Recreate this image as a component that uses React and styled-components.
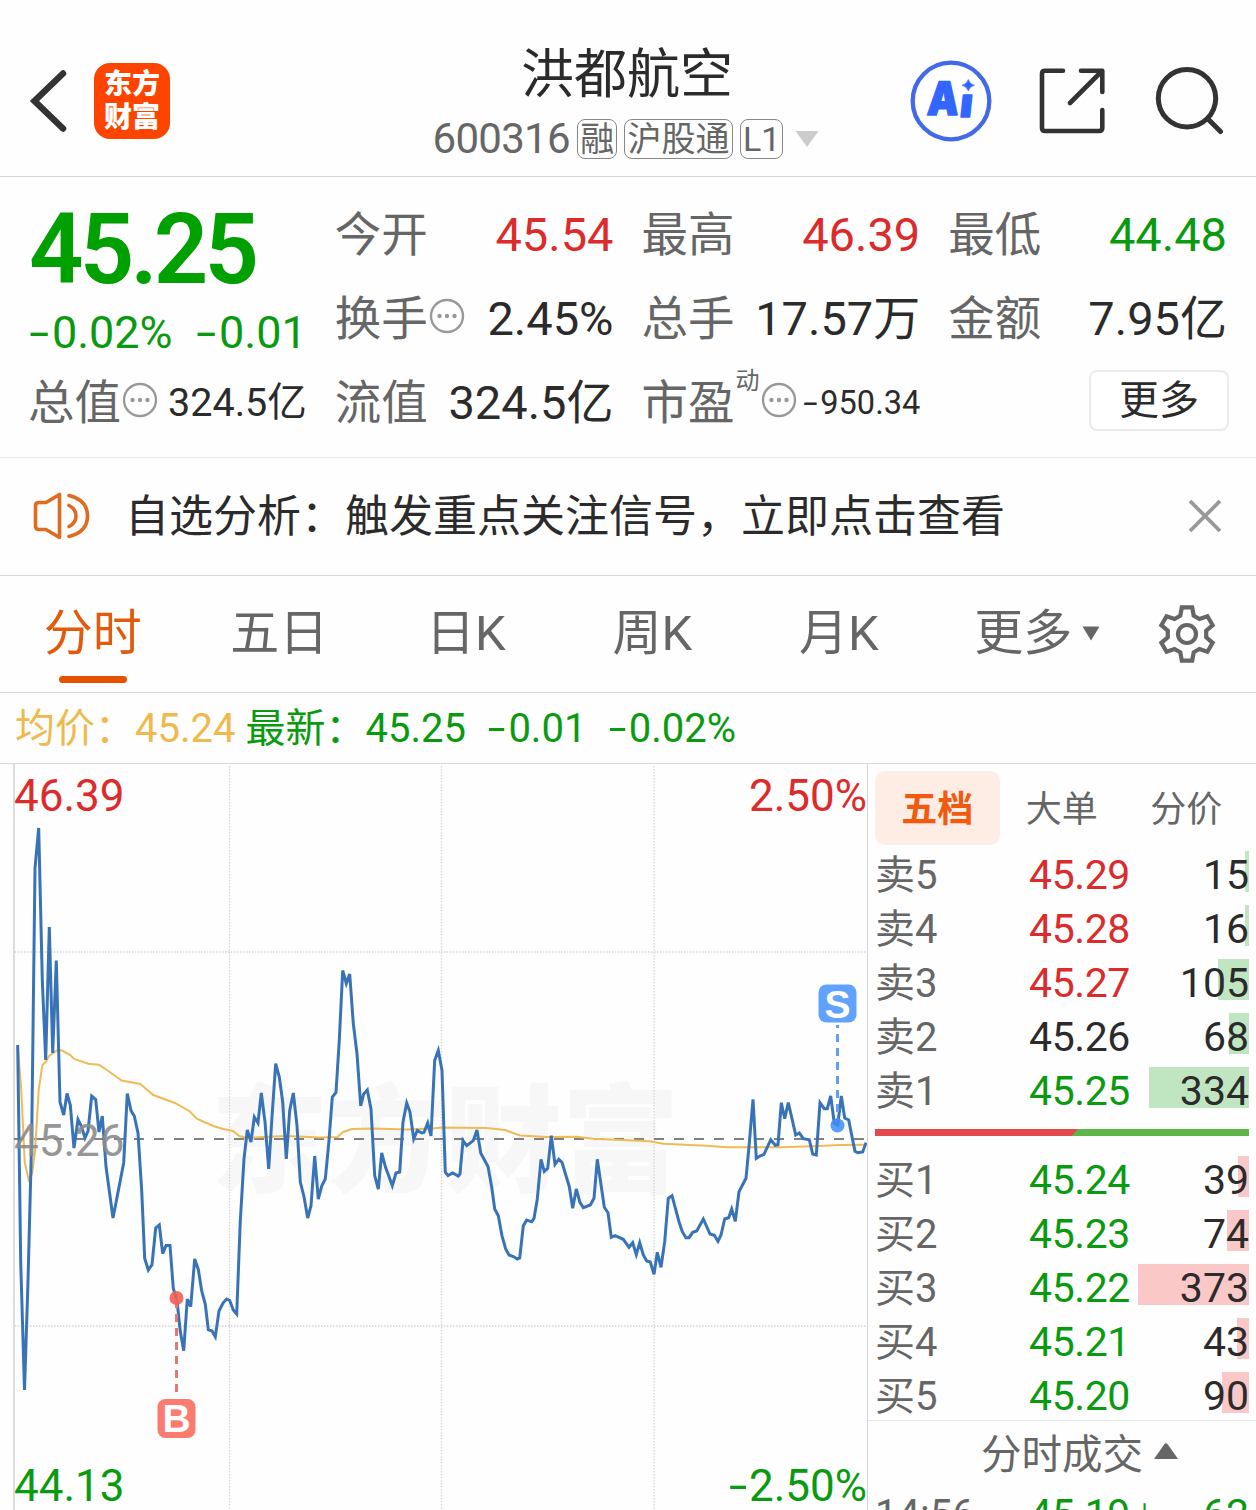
import React from "react";
import styled, { createGlobalStyle } from "styled-components";

const RED = "#dc2b2b";
const GREEN = "#0a9a10";
const DARK = "#2b2b2b";
const GREY = "#666";

const GlobalStyle = createGlobalStyle`
  * {
    box-sizing: border-box;
  }
  body {
    margin: 0;
    background: #fefefe;
    color: ${DARK};
    font-family: Roboto, "Noto Sans CJK SC", sans-serif;
  }
`;

const tabs = ["分时", "五日", "日K", "周K", "月K"];

const sells = [
  { name: "卖5", price: "45.29", count: 15, color: RED },
  { name: "卖4", price: "45.28", count: 16, color: RED },
  { name: "卖3", price: "45.27", count: 105, color: RED },
  { name: "卖2", price: "45.26", count: 68, color: DARK },
  { name: "卖1", price: "45.25", count: 334, color: GREEN },
];

const buys = [
  { name: "买1", price: "45.24", count: 39, color: GREEN },
  { name: "买2", price: "45.23", count: 74, color: GREEN },
  { name: "买3", price: "45.22", count: 373, color: GREEN },
  { name: "买4", price: "45.21", count: 43, color: GREEN },
  { name: "买5", price: "45.20", count: 90, color: GREEN },
];

const priceLine =
  "17.7,1045 20.7,1262 24.5,1390 28,1281 31.7,1138 35,868 38.7,828 42.3,980 45.7,1060 49.3,927 52.7,1053 56.3,960.5 60,1102 63.7,1115 67,1093.5 70.3,1105 74,1148 78,1119.5 81.3,1126 85,1138 88,1131 91.7,1096 95.7,1099.5 99,1132 102.3,1116 106,1166.5 113,1218 117,1197.5 123.7,1162.7 127.3,1093.5 131,1110.6 134.3,1116 138,1133 141.7,1190.5 144.7,1258.4 148.3,1270 152,1264.6 155.7,1228 159.3,1225 162.7,1253.6 166,1245.5 170,1245.5 173.3,1288.5 177,1300.5 180.3,1331.6 183.7,1350.7 187.3,1299 190.7,1306.7 194.7,1259 198.3,1269.4 201.7,1291 205.3,1304.3 208.3,1329.7 212,1331 215.3,1336.8 219,1311 223,1303 226.7,1299 229.7,1300.5 233.3,1310 236.7,1314 240.3,1220.7 244,1159 247.3,1130 251,1142 254.3,1117 258,1123 261.3,1093 265,1122 268.7,1169 272,1117 275.7,1063.7 279.3,1077 282.7,1102 286.3,1159 289.7,1110.5 293.3,1093 297,1125.5 300.3,1182 304,1196.7 307.7,1218 311,1205.7 314.7,1156 318.3,1199 321.7,1186 325.3,1179 329,1140.6 332.3,1097 336,1092.5 339.3,1040 342.7,970.5 346.3,983.5 349.7,974 353.3,1023.6 357,1053.7 360.7,1106 363.7,1094 367.3,1090 371,1109 374.7,1175.6 378.3,1189 381.7,1153 385.3,1166.6 392.3,1185.7 396,1173 399.7,1172 403,1122 406.7,1103 410,1112 413.7,1139 417.3,1130.5 421.7,1133 424,1132.5 427.7,1123 431,1136 434.7,1060.4 438.3,1050.4 442,1070.4 445.3,1172.3 448,1175.6 452.7,1173 458.3,1176 460,1174 463,1140.6 466.7,1145.6 473.3,1140.6 477,1130 480.7,1153 488,1166.6 491.7,1187 494.7,1209 498.3,1215.7 502,1235.8 505.7,1249 509,1255 513.3,1256.5 517.3,1259 519.7,1258 523.3,1225.8 526.7,1220 531.7,1221.8 534,1218.4 537.3,1199 541,1159.3 544.3,1171.5 547.7,1168.3 551.3,1135.7 555,1164.3 558.7,1159.3 562,1162.3 569.3,1186.7 572.7,1208.3 576.3,1189 580,1202.7 583.3,1207.7 590.3,1205 594,1198.3 597.3,1159.3 604.3,1207.3 608,1212.7 611.3,1237.3 615,1235.7 623.3,1239.3 629,1247.3 632.7,1242.7 636.3,1254.7 639.7,1242.7 643.3,1255 646.7,1261 650.3,1262 654,1274.3 657.3,1252.3 661,1267.3 664.7,1241.7 668.3,1198.3 672,1195.7 679,1221.7 682.3,1231.7 686,1237.7 689,1237.7 692.7,1232.3 696.7,1231 703.3,1219 710,1234 714.3,1235.3 718,1241.3 721,1235 724.7,1219 728.7,1217.7 731.7,1209 735.3,1221.3 739,1191.7 746,1178.3 749.3,1143.3 753,1099.3 756.3,1158.3 760,1156 764,1154.3 770.7,1139.7 775.3,1145.3 778,1144.7 781.3,1102.7 784.7,1118.7 788.3,1102.7 795.7,1135 799.3,1133 803.3,1138.7 809.3,1139.7 812.7,1154 816.3,1155 820,1102.7 824.3,1108.7 827.3,1108.7 830.7,1096 834.3,1123.3 837.7,1125 841.3,1096 844.7,1118 848.7,1120 852,1136.7 855,1151.3 857.7,1152.7 862.7,1152 866,1142.7";

const averageLine =
  "17.7,1045 21.3,1090 24.7,1162 28.7,1180 32,1174 35,1152 38.7,1090 42.3,1065 45.7,1062 49.3,1055.6 58.3,1049.4 63,1051 70.3,1055 74,1059 88.3,1063.7 99,1064.7 108.3,1071 121.7,1080.5 140.3,1084 153.3,1095 175,1103 190,1111.5 196.7,1118.7 213.3,1126 223.3,1129 233,1131 239.3,1136 246.7,1138 263.3,1137 286.7,1136 320,1137.5 337.3,1137 343.3,1132 351.7,1129 373,1128.5 406.7,1129.5 433,1128.5 441.7,1127.5 486.7,1128 505,1130 520,1135.5 546.7,1137 576.7,1136.7 593,1138.7 650,1141.3 663,1143.7 706.7,1145.7 726.7,1147.3 780,1147.3 813,1146.3 840,1145 866,1144.7";

// One tooth of the gear, turned six times round the centre
const tooth = [
  [-6.7, -18.3],
  [-5.2, -26.6],
  [5.2, -26.6],
  [6.7, -18.3],
];
const gearPoints = [0, 60, 120, 180, 240, 300]
  .map((deg) => {
    const a = (deg * Math.PI) / 180;
    return tooth
      .map(([x, y]) => `${x * Math.cos(a) - y * Math.sin(a)},${x * Math.sin(a) + y * Math.cos(a)}`)
      .join(" ");
  })
  .join(" ");

// The negative sign is drawn wider than the hyphen of the font
const Num = ({ children }) => {
  if (!children.startsWith("-")) return children;
  return (
    <>
      <Minus>-</Minus>
      {children.slice(1)}
    </>
  );
};

const Dots = () => (
  <DotsIcon viewBox="0 0 36 36">
    <circle cx="18" cy="18" r="16" fill="none" stroke="#999" strokeWidth="2.4" />
    <circle cx="10.5" cy="18" r="2.2" fill="#999" />
    <circle cx="18" cy="18" r="2.2" fill="#999" />
    <circle cx="25.5" cy="18" r="2.2" fill="#999" />
  </DotsIcon>
);

const Header = () => (
  <HeaderBar>
    <HeaderSide>
      <svg width="42" height="68" viewBox="28 67 42 68" fill="none">
        <path d="M63 73.5L34.5 101L63 128.5" stroke="#333" strokeWidth="6.5" strokeLinecap="round" />
      </svg>
      <Logo>
        <span>东方</span>
        <span>财富</span>
      </Logo>
    </HeaderSide>
    <Heading>
      <Title>洪都航空</Title>
      <Subtitle>
        <Code>600316</Code>
        <Badge>融</Badge>
        <Badge>沪股通</Badge>
        <Badge>L1</Badge>
        <svg width="24" height="16" viewBox="0 0 24 16">
          <path d="M0.5 0H23.5L12 16Z" fill="#ccc" />
        </svg>
      </Subtitle>
    </Heading>
    <HeaderSide $end>
      <svg width="82" height="82" viewBox="910 60 82 82">
        <circle cx="951" cy="101" r="38.3" fill="none" stroke="#4169e8" strokeWidth="4.3" />
        <g fill="#3366ff" stroke="#3366ff" strokeWidth="1.6" strokeLinejoin="round" fontFamily="Inter" fontWeight="900">
          <text fontSize="46" transform="translate(926.5 115) skewX(-4) scale(0.86 1)">A</text>
          <text fontSize="40" transform="translate(959 117.2) skewX(-6) scale(1.05 1)">ı</text>
          <path strokeWidth="0.6" d="M968.3 79.5Q969.7 84 974.5 85.3Q969.7 86.600 968.3 91Q966.900 86.600 962 85.3Q966.900 84 968.3 79.5Z" />
        </g>
      </svg>
      <svg width="68" height="68" viewBox="1039 67 68 68" fill="none" stroke="#333" strokeWidth="4.6" strokeLinecap="round" strokeLinejoin="round">
        <path d="M1063 70.8H1045Q1042 70.8 1042 73.8V128Q1042 131 1045 131H1099Q1102.3 131 1102.3 128V110" />
        <path d="M1081 70.8H1102.3V92" />
        <path d="M1101 72L1070 103" />
      </svg>
      <svg width="70" height="70" viewBox="1154 65.5 70 70" fill="none" stroke="#333" strokeWidth="5" strokeLinecap="round">
        <circle cx="1187" cy="97.7" r="28.7" />
        <path d="M1208 118.5L1220.5 131" />
      </svg>
    </HeaderSide>
  </HeaderBar>
);

const Quote = () => (
  <QuoteGrid>
    <Current>
      <BigPrice>45.25</BigPrice>
      <Change>
        <span><Num>-0.02%</Num></span>
        <span><Num>-0.01</Num></span>
      </Change>
    </Current>
    <Cell>
      <Label>今开</Label>
      <Value $color={RED}>45.54</Value>
    </Cell>
    <Cell>
      <Label>最高</Label>
      <Value $color={RED}>46.39</Value>
    </Cell>
    <Cell>
      <Label>最低</Label>
      <Value $color={GREEN}>44.48</Value>
    </Cell>
    <Cell>
      <Label>换手<Dots /></Label>
      <Value>2.45%</Value>
    </Cell>
    <Cell>
      <Label>总手</Label>
      <Value>17.57万</Value>
    </Cell>
    <Cell>
      <Label>金额</Label>
      <Value>7.95亿</Value>
    </Cell>
    <Cell>
      <Label>总值<Dots /></Label>
      <Value $size={39.5}>324.5亿</Value>
    </Cell>
    <Cell>
      <Label>流值</Label>
      <Value>324.5亿</Value>
    </Cell>
    <Cell>
      <Label>市盈<Sup>动</Sup><Dots /></Label>
      <Value $size={32.5}><Num>-950.34</Num></Value>
    </Cell>
    <Cell $end>
      <MoreButton>更多</MoreButton>
    </Cell>
  </QuoteGrid>
);

const Notice = () => (
  <NoticeBar>
    <svg width="60" height="52" viewBox="32 490 60 52" fill="none" stroke="#e06a20" strokeWidth="3.6" strokeLinejoin="round" strokeLinecap="round">
      <path d="M59.5 494.5V537.5L46 529.5H39Q35.5 529.5 35.5 526V506Q35.5 502.5 39 502.5H46Z" />
      <path d="M69 505.5Q76 509 76 516Q76 523 69 526.5" />
      <path d="M69 495.5Q87.5 500 87.5 516Q87.5 532 69 536.5" />
    </svg>
    <NoticeText>自选分析：触发重点关注信号，立即点击查看</NoticeText>
    <svg width="36" height="36" viewBox="0 0 36 36">
      <path d="M3 3L33 33M33 3L3 33" stroke="#999" strokeWidth="3.8" />
    </svg>
  </NoticeBar>
);

const Chart = () => (
  <ChartSvg viewBox="0 764 867 746">
    <text x="211" y="1183" fontSize="117" fontWeight="900" fill="#f7f7f7">东方财富</text>
    <g stroke="#d4d4d4" strokeWidth="1.3" strokeDasharray="1.5 1.5">
      <path d="M229.5 766V1510M441.5 766V1510M654 766V1510" />
      <path d="M15 952H866M15 1326H866" />
    </g>
    <path d="M14 764V1510" stroke="#ddd" strokeWidth="2" />
    <path d="M14 1139H866" stroke="#808080" strokeWidth="2" strokeDasharray="10 10" />
    <polyline points={averageLine} fill="none" stroke="#efbb55" strokeWidth="2" />
    <polyline points={priceLine} fill="none" stroke="#3873b8" strokeWidth="3" />
    <path d="M176.5 1300V1398" stroke="#e5796d" strokeWidth="3" strokeDasharray="8 6" />
    <circle cx="176.5" cy="1298" r="7" fill="#f25f54" opacity="0.9" />
    <rect x="157.5" y="1399" width="38" height="39" rx="8" fill="#fb7c6e" />
    <path d="M837.5 1025V1120" stroke="#649fe8" strokeWidth="3" strokeDasharray="3 6 8 6 8 6 8 6 8 6 8 6 8 6" />
    <circle cx="837.5" cy="1125.5" r="7" fill="#3c8cff" opacity="0.85" />
    <rect x="818.5" y="984.5" width="38" height="38" rx="8" fill="#62a2ff" />
    <g fontFamily="Liberation Sans" fontWeight="700" fontSize="39" fill="#fff" textAnchor="middle">
      <text x="176.5" y="1432">B</text>
      <text x="837.5" y="1017.5">S</text>
    </g>
    <g fontSize="44">
      <text x="14" y="811" fill={RED}>46.39</text>
      <text x="867" y="811" fill={RED} textAnchor="end">2.50%</text>
      <text x="14" y="1156" fill="#8c8c8c" opacity="0.9">45.26</text>
      <text x="14" y="1501" fill={GREEN}>44.13</text>
      <text x="867" y="1501" fill={GREEN} textAnchor="end">2.50%</text>
      <text transform="translate(729 1501) scale(1.5 1)" fill={GREEN}>-</text>
    </g>
  </ChartSvg>
);

const Level = ({ item, side }) => (
  <LevelRow>
    <LevelName>{item.name}</LevelName>
    <LevelPrice $color={item.color}>{item.price}</LevelPrice>
    <LevelCount>
      <VolumeBar $side={side} style={{ width: Math.max(4, Math.floor(item.count * 0.3)) }} />
      <span>{item.count}</span>
    </LevelCount>
  </LevelRow>
);

const App = () => {
  return (
    <Page>
      <GlobalStyle />
      <Header />
      <Quote />
      <Notice />
      <TabBar>
        {tabs.map((tab, index) => (
          <Tab key={tab} $active={index === 0}>
            {tab}
          </Tab>
        ))}
        <Tab $more>
          更多
          <svg width="18" height="16" viewBox="0 0 18 16">
            <path d="M0.5 0.5H17.5L9 14.5Z" fill={GREY} />
          </svg>
        </Tab>
        <svg width="62" height="62" viewBox="-30 -31 62 62" fill="none" stroke={GREY} strokeWidth="4.2">
          <circle r="9" />
          <polygon points={gearPoints} />
        </svg>
      </TabBar>
      <InfoBar>
        <Average>
          均价：<span>45.24</span>
        </Average>
        <Latest>
          最新：<span>45.25</span>
          <span><Num>-0.01</Num></span>
          <span><Num>-0.02%</Num></span>
        </Latest>
      </InfoBar>
      <Main>
        <Chart />
        <Panel>
          <PanelTabs>
            <PanelTab $active>五档</PanelTab>
            <PanelTab>大单</PanelTab>
            <PanelTab>分价</PanelTab>
          </PanelTabs>
          {sells.map((item) => (
            <Level key={item.name} item={item} side="sell" />
          ))}
          <RatioBar />
          {buys.map((item) => (
            <Level key={item.name} item={item} side="buy" />
          ))}
          <DealsTitle>
            分时成交
            <svg width="24" height="16" viewBox="0 0 24 16">
              <path d="M0 16L10.5 1Q12 -0.5 13.5 1L24 16Z" fill={GREY} />
            </svg>
          </DealsTitle>
          <LevelRow>
            <LevelName>14:56</LevelName>
            <LevelPrice $color={GREEN}>
              45.19<Arrow>↓</Arrow>
            </LevelPrice>
            <LevelCount $color={GREEN}>62</LevelCount>
          </LevelRow>
        </Panel>
      </Main>
    </Page>
  );
};

const Page = styled.div`
  width: 1256px;
  height: 1510px;
  overflow: hidden;
  display: flex;
  flex-direction: column;
  white-space: nowrap;
  svg {
    flex: none;
  }
`;

const HeaderBar = styled.header`
  height: 177px;
  flex: none;
  display: grid;
  grid-template-columns: 1fr auto 1fr;
  padding: 0 32px 0 28px;
  border-bottom: 1px solid #d5d7d6;
`;

const HeaderSide = styled.div`
  display: flex;
  align-items: center;
  height: 82px;
  margin-top: 60px;
  gap: ${(props) => (props.$end ? "47px" : "24px")};
  justify-content: ${(props) => (props.$end ? "flex-end" : "flex-start")};
`;

const Logo = styled.div`
  width: 76px;
  height: 76px;
  border-radius: 16px;
  background: #ff4400;
  color: #fff;
  display: flex;
  flex-direction: column;
  align-items: center;
  justify-content: center;
  font-size: 28px;
  font-weight: 900;
  line-height: 33px;
`;

const Heading = styled.div`
  display: flex;
  flex-direction: column;
  align-items: center;
  padding-top: 45px;
`;

const Title = styled.h1`
  margin: 0 0 0 2px;
  font-size: 53px;
  line-height: 60px;
  font-weight: 400;
`;

const Subtitle = styled.div`
  display: flex;
  align-items: center;
  gap: 7px;
  height: 40px;
  margin-top: 14px;
  color: ${GREY};
  svg {
    margin-left: 5px;
  }
`;

const Code = styled.span`
  font-size: 42px;
  line-height: 42px;
  letter-spacing: -0.7px;
`;

const Badge = styled.span`
  height: 40px;
  padding: 0 2.2px;
  border: 1.5px solid #888;
  border-radius: 8px;
  font-size: 34px;
  line-height: 38px;
`;

const QuoteGrid = styled.section`
  height: 281px;
  flex: none;
  display: grid;
  grid-template-columns: repeat(4, 1fr);
  grid-template-rows: repeat(3, 84px);
  column-gap: 30px;
  padding: 16px 29px 0 30px;
  border-bottom: 1px solid #eaeaea;
`;

const Current = styled.div`
  grid-row: span 2;
  color: #00a000;
`;

const BigPrice = styled.div`
  margin-left: -1px;
  font-size: 99px;
  line-height: 112px;
  height: 110px;
  font-weight: 600;
  letter-spacing: -4px;
  transform: scaleX(0.965);
  transform-origin: left;
`;

const Change = styled.div`
  display: flex;
  justify-content: space-between;
  font-size: 45px;
  line-height: 60px;
  color: ${GREEN};
`;

const Minus = styled.span`
  display: inline-block;
  transform: scaleX(1.6);
  margin: 0 0.15em 0 0.06em;
`;

const Cell = styled.div`
  display: flex;
  align-items: center;
  justify-content: ${(props) => (props.$end ? "flex-end" : "space-between")};
`;

const Label = styled.span`
  display: flex;
  align-items: center;
  margin-left: -2px;
  font-size: 46.5px;
  line-height: 62px;
  color: ${GREY};
`;

const Value = styled.span`
  font-size: ${(props) => props.$size || 47}px;
  line-height: 60px;
  color: ${(props) => props.$color || DARK};
`;

const DotsIcon = styled.svg`
  width: 36px;
  height: 36px;
  margin: -6px 0 0 1px;
`;

const Sup = styled.sup`
  font-size: 24px;
  line-height: 24px;
  align-self: flex-start;
  margin: -3px 0 0 1px;
`;

const MoreButton = styled.button`
  width: 140px;
  height: 61px;
  margin: -5px -2px 0 0;
  border: 2px solid #ebebeb;
  border-radius: 8px;
  background: #fff;
  color: ${DARK};
  font-family: inherit;
  font-size: 40px;
  line-height: 55px;
  padding: 0;
`;

const NoticeBar = styled.section`
  height: 118px;
  flex: none;
  display: flex;
  align-items: center;
  padding: 0 33px 2px 32px;
  border-bottom: 1px solid #d9d9d9;
`;

const NoticeText = styled.p`
  flex: 1;
  margin: 2px 0 0 33px;
  font-size: 44px;
  line-height: 60px;
`;

const TabBar = styled.nav`
  height: 117px;
  flex: none;
  display: grid;
  grid-template-columns: repeat(6, 186.5px) 1fr;
  align-items: center;
  justify-items: center;
  border-bottom: 1px solid #d9d9d9;
`;

const Tab = styled.div`
  display: flex;
  align-items: center;
  gap: 10px;
  position: relative;
  font-size: 49px;
  height: 116px;
  line-height: 120px;
  margin-left: -1px;
  color: ${(props) => (props.$active ? "#e25a0c" : GREY)};
  padding-left: ${(props) => (props.$more ? "24px" : "0")};
  &::after {
    content: "";
    display: ${(props) => (props.$active ? "block" : "none")};
    position: absolute;
    left: 15px;
    bottom: 9px;
    width: 68px;
    height: 7px;
    border-radius: 4px;
    background: #e65100;
  }
`;

const InfoBar = styled.div`
  height: 71px;
  flex: none;
  display: flex;
  padding-left: 15px;
  gap: 10px;
  font-size: 40px;
  line-height: 71px;
  border-bottom: 1px solid #d9d9d9;
`;

const Average = styled.div`
  color: #f0b94e;
`;

const Latest = styled.div`
  display: flex;
  color: ${GREEN};
  span + span {
    margin-left: 23px;
  }
`;

const Main = styled.main`
  display: flex;
  flex: 1;
  min-height: 0;
`;

const ChartSvg = styled.svg`
  width: 867px;
  height: 746px;
`;

const Panel = styled.aside`
  flex: 1;
  border-left: 1px solid #d5d5d5;
  padding: 7px 7px 0 7px;
`;

const PanelTabs = styled.div`
  display: flex;
  margin-bottom: 2px;
`;

const PanelTab = styled.div`
  width: 124.5px;
  height: 74px;
  border-radius: 10px;
  text-align: center;
  font-size: 36px;
  line-height: 79px;
  font-weight: ${(props) => (props.$active ? 700 : 400)};
  color: ${(props) => (props.$active ? "#f25a10" : GREY)};
  background: ${(props) => (props.$active ? "#feede5" : "none")};
`;

const LevelRow = styled.div`
  display: grid;
  grid-template-columns: 100px 155px 1fr;
  height: 54px;
  font-size: 41px;
  line-height: 56px;
`;

const LevelName = styled.span`
  color: ${GREY};
  font-size: 40px;
  line-height: 57px;
`;

const LevelPrice = styled.span`
  text-align: right;
  letter-spacing: -0.4px;
  color: ${(props) => props.$color};
`;

const LevelCount = styled.span`
  position: relative;
  text-align: right;
  color: ${(props) => props.$color || DARK};
  span {
    position: relative;
  }
`;

const VolumeBar = styled.div`
  position: absolute;
  top: 4px;
  right: 0;
  height: 41px;
  background: ${(props) => (props.$side === "sell" ? "#c0e6c1" : "#fbc8c8")};
`;

const RatioBar = styled.div`
  height: 7px;
  margin: 12px 0 16px;
  background: linear-gradient(135deg, #e24b4b 0 53.5%, #5fb548 53.5%);
`;

const DealsTitle = styled.div`
  display: flex;
  align-items: center;
  justify-content: center;
  gap: 11px;
  height: 66px;
  margin: -2px -7px 0;
  padding: 3px 0 0 35px;
  border-top: 1px solid #e6e6e6;
  font-size: 40.5px;
  line-height: 60px;
  color: ${GREY};
  svg {
    margin-bottom: 9px;
  }
`;

const Arrow = styled.span`
  display: inline-block;
  width: 0;
  font-size: 29px;
`;

export default App;
